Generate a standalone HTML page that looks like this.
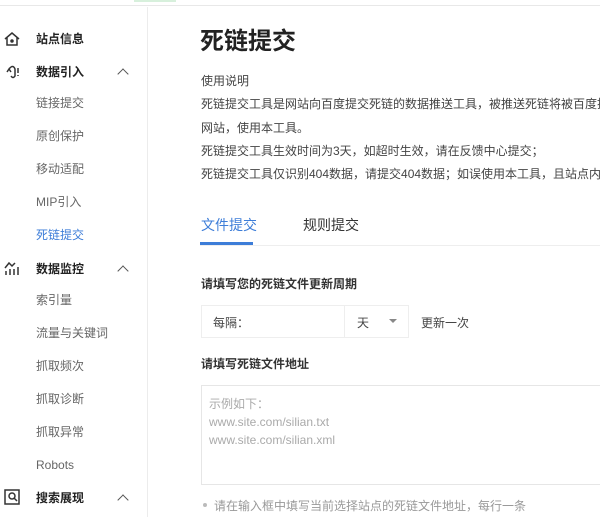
<!DOCTYPE html>
<html><head><meta charset="utf-8"><style>
*{margin:0;padding:0;box-sizing:border-box}
body{width:600px;height:517px;overflow:hidden;background:#fff;font-family:"Liberation Sans","Noto Sans CJK SC",sans-serif;font-size:12px;color:#333;position:relative}
.a{position:absolute;white-space:nowrap}
.top{position:absolute;left:0;top:0;width:600px;height:6px;border-bottom:1px solid #e8e8e8;background:#fff}
.green{position:absolute;left:134px;top:0;width:42px;height:2px;background:#d7f0dc}
.side{position:absolute;left:0;top:7px;width:148px;height:510px;border-right:1px solid #ececec}
.it{position:absolute;left:36px;color:#666;font-size:12px;line-height:14px}
.h{color:#222;font-weight:bold}
.car{position:absolute;left:119px;width:8px;height:8px;border-left:1.5px solid #555;border-top:1.5px solid #555;transform:rotate(45deg)}
p.l{position:absolute;left:201px;font-size:12px;color:#444;white-space:nowrap}
</style></head><body>
<div class="top"></div><div class="green"></div>
<div class="side"></div>
<svg class="a" style="left:4px;top:31px" width="16" height="16" viewBox="0 0 16 16" fill="none" stroke="#333" stroke-width="1.5"><path d="M1 8 L8 2 L15 8 M3 6.5 V14 H13 V6.5"/><circle cx="8" cy="10" r="1" fill="#333"/></svg>
<svg class="a" style="left:5px;top:64px" width="16" height="16" viewBox="0 0 16 16" fill="none" stroke="#333" stroke-width="1.5"><path d="M4 5 Q8 0 10 5 V12 Q8 15 6 12 M2 8 L4 5 L6 8"/><path d="M13 4 V9 M13 11 V12"/></svg>
<svg class="a" style="left:4px;top:260px" width="16" height="16" viewBox="0 0 16 16" fill="none" stroke="#333" stroke-width="1.5"><path d="M1 8 L5 3 L8 6 L11 3 M2 11 V15 M6 9 V15 M10 9 V15 M14 7 V15"/></svg>
<svg class="a" style="left:4px;top:489px" width="16" height="16" viewBox="0 0 16 16" fill="none" stroke="#333" stroke-width="1.5"><path d="M1 1 H15 V15 H1 Z"/><circle cx="8" cy="7" r="3"/><path d="M10 9 L13 12"/></svg>
<div class="it h" style="top:32px">站点信息</div>
<div class="it h" style="top:65px">数据引入</div><div class="car" style="top:70px"></div>
<div class="it" style="top:96px">链接提交</div>
<div class="it" style="top:129px">原创保护</div>
<div class="it" style="top:162px">移动适配</div>
<div class="it" style="top:195px">MIP引入</div>
<div class="it" style="top:228px;color:#3d7dd8">死链提交</div>
<div class="it h" style="top:262px">数据监控</div><div class="car" style="top:267px"></div>
<div class="it" style="top:293px">索引量</div>
<div class="it" style="top:326px">流量与关键词</div>
<div class="it" style="top:359px">抓取频次</div>
<div class="it" style="top:392px">抓取诊断</div>
<div class="it" style="top:425px">抓取异常</div>
<div class="it" style="top:458px">Robots</div>
<div class="it h" style="top:491px">搜索展现</div><div class="car" style="top:496px"></div>

<div class="a" style="left:200px;top:27px;font-size:24px;font-weight:bold;color:#222;line-height:30px">死链提交</div>
<p class="l" style="top:72px">使用说明</p>
<p class="l" style="top:95px">死链提交工具是网站向百度提交死链的数据推送工具，被推送死链将被百度搜索</p>
<p class="l" style="top:119px">网站，使用本工具。</p>
<p class="l" style="top:142px">死链提交工具生效时间为3天，如超时生效，请在反馈中心提交；</p>
<p class="l" style="top:165px">死链提交工具仅识别404数据，请提交404数据；如误使用本工具，且站点内容不</p>
<div class="a" style="left:201px;top:215px;font-size:14px;color:#3d7dd8">文件提交</div>
<div class="a" style="left:303px;top:215px;font-size:14px;color:#333">规则提交</div>
<div class="a" style="left:200px;top:245px;width:400px;height:1px;background:#eee"></div>
<div class="a" style="left:200px;top:242px;width:53px;height:3px;background:#3d7dd8"></div>
<div class="a" style="left:201px;top:275px;font-weight:bold;color:#333">请填写您的死链文件更新周期</div>
<div class="a" style="left:201px;top:305px;width:208px;height:33px;border:1px solid #eee"></div>
<div class="a" style="left:344px;top:305px;width:1px;height:33px;background:#eee"></div>
<div class="a" style="left:213px;top:314px;color:#444">每隔：</div>
<div class="a" style="left:357px;top:314px;color:#444">天</div>
<div class="a" style="left:389px;top:319px;border-left:4px solid transparent;border-right:4px solid transparent;border-top:4px solid #888"></div>
<div class="a" style="left:421px;top:314px;color:#444">更新一次</div>
<div class="a" style="left:201px;top:355px;font-weight:bold;color:#333">请填写死链文件地址</div>
<div class="a" style="left:201px;top:385px;width:410px;height:100px;border:1px solid #e6e6e6"></div>
<div class="a" style="left:209px;top:395px;color:#aaa;line-height:18px">示例如下：<br>www.site.com/silian.txt<br>www.site.com/silian.xml</div>
<div class="a" style="left:203px;top:503px;width:4px;height:4px;border-radius:2px;background:#bbb"></div>
<div class="a" style="left:214px;top:497px;color:#999">请在输入框中填写当前选择站点的死链文件地址，每行一条</div>
</body></html>
